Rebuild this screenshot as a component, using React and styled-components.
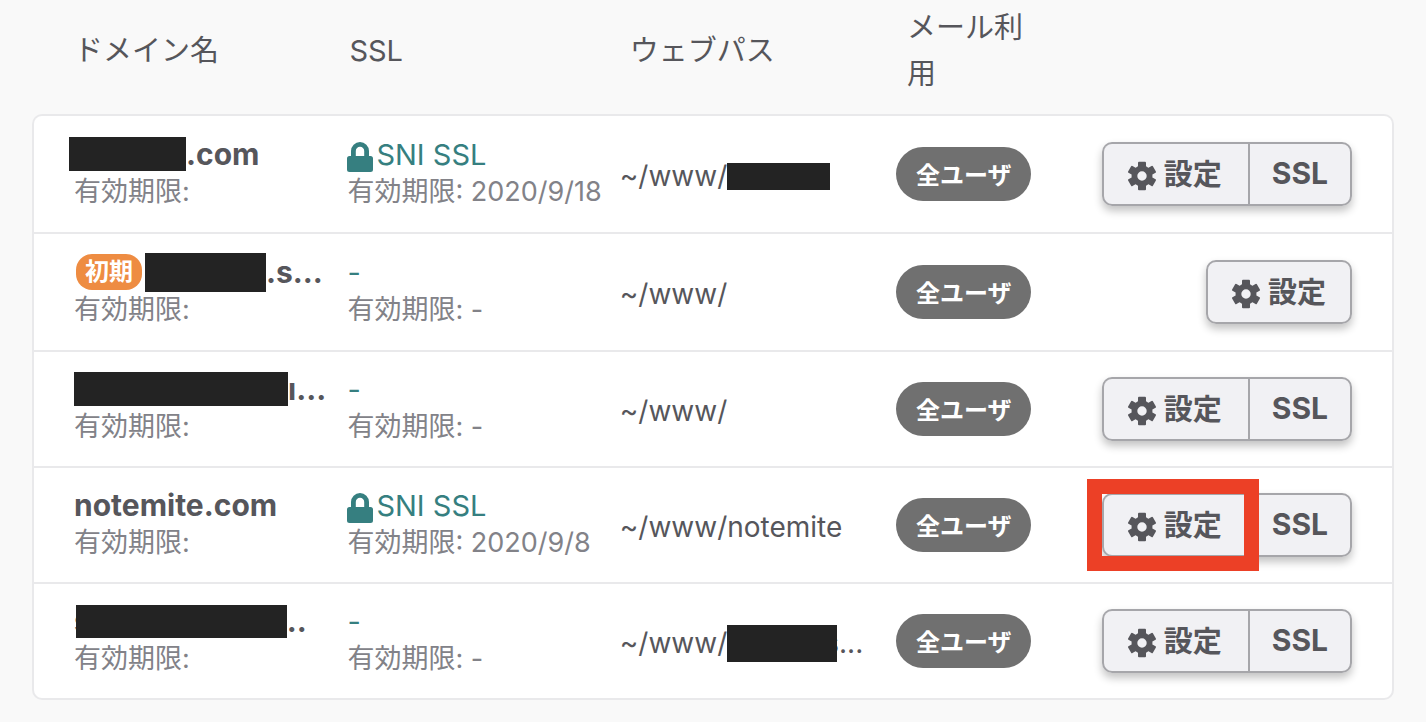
import React from 'react'
import styled, { createGlobalStyle } from 'styled-components'

const domains = [
  { id: 1, mask: { width: 117, height: 34, before: -5 }, name: '.com', secure: true, sslLimit: '2020/9/18', pathMask: { width: 103, height: 27 }, path: '', hasSsl: true },
  { id: 2, initial: true, mask: { width: 121, height: 39 }, name: '.s...', sslLimit: '-', path: '', hasSsl: false },
  { id: 3, mask: { width: 214, height: 34 }, name: 'ı...', sslLimit: '-', path: '', hasSsl: true },
  { id: 4, name: 'notemite.com', secure: true, sslLimit: '2020/9/8', path: 'notemite', hasSsl: true, marked: true },
  { id: 5, start: 's', mask: { width: 211, height: 33, before: -15 }, name: '..', sslLimit: '-', pathMask: { width: 110, height: 37, after: -13 }, path: 's...', hasSsl: true },
]

function LockIcon() {
  return (
    <Lock viewBox="0 0 26 30" aria-hidden="true">
      <path fillRule="evenodd" d="M4 14V9a9 9 0 0 1 18 0v5h1.500a2.500 2.500 0 0 1 2.500 2.500v11a2.500 2.500 0 0 1-2.500 2.500h-21a2.500 2.500 0 0 1-2.500-2.500v-11a2.500 2.500 0 0 1 2.500-2.500zM8.800 14h8.400V9a4.200 4.200 0 0 0-8.400 0z" />
    </Lock>
  )
}

function GearIcon() {
  return (
    <Gear viewBox="0 0 28 28" aria-hidden="true">
      <circle cx="14" cy="14" r="7.600" fill="none" stroke="currentColor" strokeWidth="5.800" />
      {[0, 60, 120, 180, 240, 300].map(angle => (
        <rect key={angle} x="10" y="-0.300" width="8" height="7" rx="1" transform={`rotate(${angle} 14 14)`} />
      ))}
    </Gear>
  )
}

function Redacted({ mask }) {
  return <Mask $width={mask.width} $height={mask.height} $before={mask.before} $after={mask.after} />
}

function DomainRow({ domain }) {
  return (
    <Row $height={domain.initial ? 118 : 116}>
      <InfoCell>
        <DomainName>
          {domain.initial && <Initial>初期</Initial>}
          {domain.start}
          {domain.mask && <Redacted mask={domain.mask} />}
          {domain.name}
        </DomainName>
        <Limit>有効期限:</Limit>
      </InfoCell>
      <InfoCell>
        <SslStatus>
          {domain.secure ? <><LockIcon />SNI SSL</> : '-'}
        </SslStatus>
        <Limit>有効期限: {domain.sslLimit}</Limit>
      </InfoCell>
      <Cell>
        <WebPath>
          ~/www/
          {domain.pathMask && <Redacted mask={domain.pathMask} />}
          {domain.path}
        </WebPath>
      </Cell>
      <Cell>
        <UserBadge>全ユーザ</UserBadge>
      </Cell>
      <ActionCell>
        <ButtonGroup>
          <Button type="button">
            <GearIcon />設定
            {domain.marked && <Marker />}
          </Button>
          {domain.hasSsl && <Button type="button">SSL</Button>}
        </ButtonGroup>
      </ActionCell>
    </Row>
  )
}

function App() {
  return (
    <Page>
      <GlobalStyle />
      <Table>
        <colgroup>
          <Col $width={20} />
          <Col $width={20} />
          <Col $width={20.2} />
          <Col $width={14} />
          <Col $width={25.8} />
        </colgroup>
        <thead>
          <tr>
            <HeadCell scope="col" $indent={42}>ドメイン名</HeadCell>
            <HeadCell scope="col" $indent={45}>SSL</HeadCell>
            <HeadCell scope="col" $indent={53}>ウェブパス</HeadCell>
            <HeadCell scope="col" $indent={55}>メール利用</HeadCell>
            <HeadCell as="td" />
          </tr>
        </thead>
        <tbody>
          {domains.map(domain => (
            <DomainRow key={domain.id} domain={domain} />
          ))}
        </tbody>
      </Table>
    </Page>
  )
}

export default App

const GlobalStyle = createGlobalStyle`
  body {
    margin: 0;
    background: #f9f9f9;
    color: #56565b;
    font-family: Inter, "Noto Sans CJK JP", sans-serif;
    font-size: 29px;
  }
`;
const Page = styled.main`
  padding: 0 32px 22px;
`;
const Table = styled.table`
  width: 100%;
  table-layout: fixed;
  border-collapse: separate;
  border-spacing: 0;
`;
const Col = styled.col`
  width: ${({ $width }) => $width}%;
`;
const HeadCell = styled.th`
  height: 114px;
  padding: 0 0 12px ${({ $indent = 0 }) => $indent}px;
  box-sizing: border-box;
  font-weight: 400;
  line-height: 46px;
  text-align: left;
`;
const Row = styled.tr`
  height: ${({ $height }) => $height}px;

  &:first-child {
    height: 120px;
  }
`;
const Cell = styled.td`
  padding: 0 0 0 43px;
  background: #fff;
  border-bottom: 2px solid #e9e9eb;
  white-space: nowrap;

  ${Row}:first-child > & {
    border-top: 2px solid #e9e9eb;
  }
  &:first-child {
    border-left: 2px solid #e9e9eb;
    padding-left: 40px;
  }
  &:last-child {
    border-right: 2px solid #e9e9eb;
  }
  ${Row}:first-child > &:first-child {
    border-top-left-radius: 10px;
  }
  ${Row}:first-child > &:last-child {
    border-top-right-radius: 10px;
  }
  ${Row}:last-child > &:first-child {
    border-bottom-left-radius: 10px;
  }
  ${Row}:last-child > &:last-child {
    border-bottom-right-radius: 10px;
  }
`;
const InfoCell = styled(Cell)`
  padding-bottom: 4px;
`;
const ActionCell = styled(Cell)`
  padding: 0 40px 0 0;
  text-align: right;
`;
const DomainName = styled.div`
  display: flex;
  align-items: center;
  height: 40px;
  font-size: 30px;
  font-weight: 700;
`;
const Initial = styled.span`
  margin: 0 3px 0 2px;
  padding: 0 9px;
  border-radius: 16px;
  background: #ee8c42;
  color: #fff;
  font-size: 24px;
  line-height: 36px;
`;
const Mask = styled.span`
  position: relative;
  flex: none;
  width: ${({ $width }) => $width}px;
  height: ${({ $height }) => $height}px;
  margin-left: ${({ $before = 0 }) => $before}px;
  margin-right: ${({ $after = 0 }) => $after}px;
  background: #232323;
`;
const Limit = styled.div`
  color: #828288;
  font-size: 27px;
  line-height: 36px;
`;
const SslStatus = styled.div`
  display: flex;
  align-items: center;
  height: 40px;
  color: #367f80;
`;
const Lock = styled.svg`
  width: 26px;
  height: 30px;
  margin: 6px 3px 0 0;
  fill: currentColor;
`;
const WebPath = styled.div`
  display: flex;
  align-items: center;
  padding-top: 4px;
  font-size: 28px;
  line-height: 40px;
`;
const UserBadge = styled.span`
  display: inline-block;
  margin-left: 1px;
  padding: 4px 20px 0;
  border-radius: 27px;
  background: #707070;
  color: #fff;
  font-size: 24px;
  font-weight: 700;
  line-height: 50px;
  vertical-align: middle;
`;
const ButtonGroup = styled.div`
  display: inline-flex;
  vertical-align: middle;
  border-radius: 10px;
  box-shadow: 0 5px 8px rgba(0, 0, 0, 0.24);
`;
const Button = styled.button`
  position: relative;
  display: flex;
  align-items: center;
  gap: 8px;
  height: 64px;
  padding: 0 22px 2px;
  border: 2px solid #a6a6aa;
  background: #f1f1f4;
  color: #56565b;
  font: inherit;
  font-size: 30px;
  font-weight: 700;
  cursor: pointer;

  &:first-child {
    padding: 0 24px 4px;
    border-radius: 10px 0 0 10px;
    font-size: 29px;
  }
  &:not(:last-child) {
    padding-right: 26px;
    border-right: 0;
  }
  &:last-child {
    border-radius: 0 10px 10px 0;
  }
  &:only-child {
    border-radius: 10px;
  }
`;
const Gear = styled.svg`
  width: 28px;
  height: 28px;
  margin-top: 8px;
  fill: currentColor;
  overflow: visible;
`;
const Marker = styled.span`
  position: absolute;
  inset: -16px -11px -16px -17px;
  border: 15px solid #ec4026;
  pointer-events: none;
  z-index: 1;
`;
